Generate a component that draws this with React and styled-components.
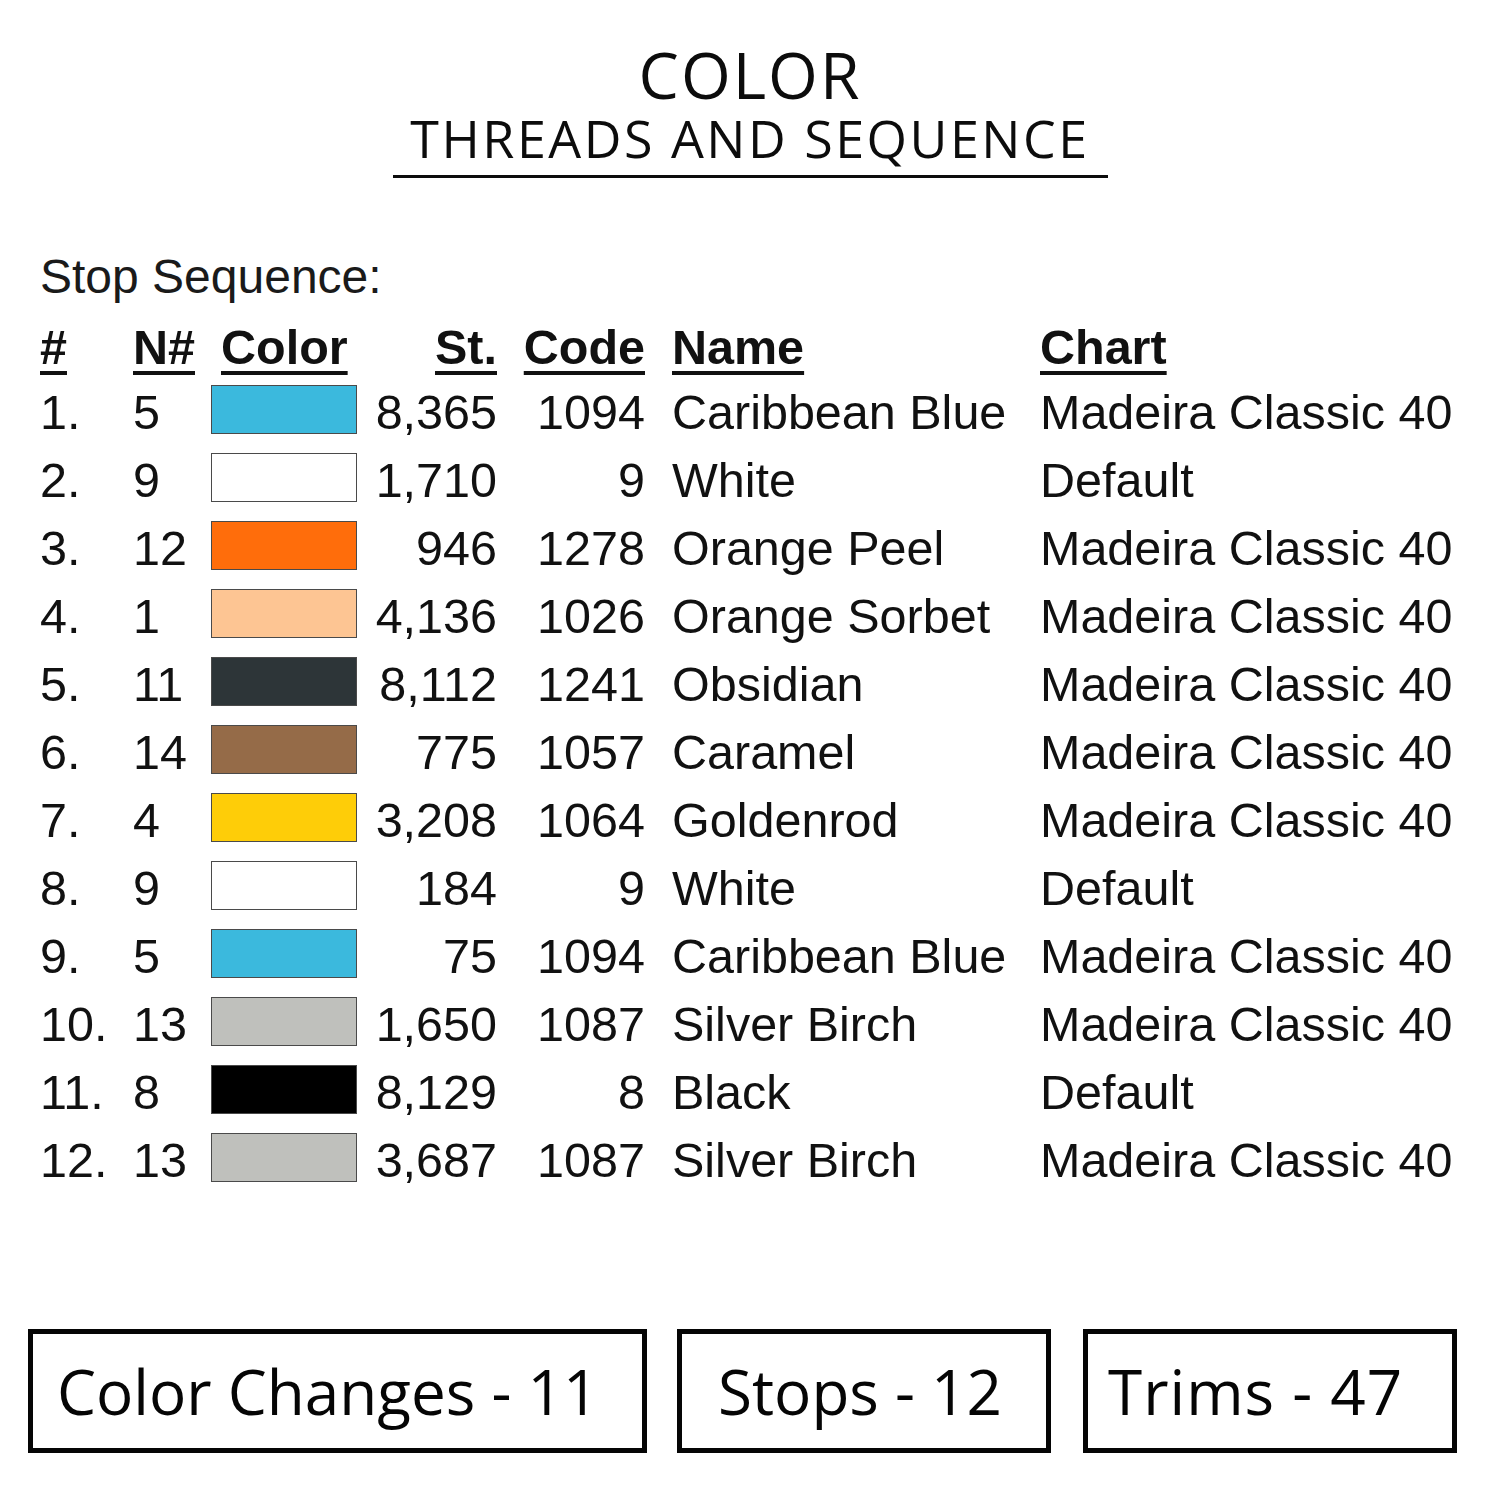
import React from 'react';
import styled, { createGlobalStyle } from 'styled-components';

const GlobalStyle = createGlobalStyle`
	html, body {
		margin: 0;
		padding: 0;
		background: #ffffff;
	}
	body {
		font-family: "Liberation Sans", Arial, sans-serif;
		color: #111111;
	}
`;

const Page = styled.div`
	width: 1500px;
	height: 1500px;
	display: flex;
	flex-direction: column;
	background: #ffffff;
	overflow: hidden;
`;

const TitleBlock = styled.div`
	display: flex;
	flex-direction: column;
	align-items: center;
	padding-top: 40px;
	font-family: "Open Sans", "Lato", sans-serif;
	color: #0c0c0c;
`;

const Title = styled.div`
	font-size: 64px;
	line-height: 70px;
	height: 70px;
	font-weight: 500;
	letter-spacing: 2px;
`;

const Subtitle = styled.div`
	font-size: 52px;
	line-height: 56px;
	height: 56px;
	font-weight: 400;
	letter-spacing: 2.5px;
`;

const Rule = styled.div`
	width: 715px;
	height: 3px;
	margin-top: 9px;
	background: #0c0c0c;
`;

const Section = styled.div`
	padding-left: 40px;
	margin-top: 71px;
`;

const Caption = styled.div`
	font-size: 48px;
	line-height: 56px;
	height: 56px;
	margin-bottom: 11px;
	color: #1a1a1a;
`;

const Table = styled.div`
	display: grid;
	grid-template-columns: 93px 78px 146px 140px 148px 395px auto;
	font-size: 48.5px;
`;

const HeadCell = styled.div`
	height: 62px;
	line-height: 62px;
	font-weight: 700;
	text-decoration: underline;
	text-decoration-thickness: 4px;
	text-underline-offset: 7px;
	text-align: ${(p) => (p.$right ? 'right' : 'left')};
	padding-left: ${(p) => p.$indent || 0}px;
	white-space: nowrap;
`;

const Cell = styled.div`
	height: 68px;
	line-height: 68px;
	text-align: ${(p) => (p.$right ? 'right' : 'left')};
	padding-left: ${(p) => p.$indent || 0}px;
	white-space: nowrap;
	color: #111111;
`;

const SwatchCell = styled.div`
	height: 68px;
	display: flex;
	align-items: center;
	padding-bottom: 6px;
	box-sizing: border-box;
`;

const Swatch = styled.div`
	width: 146px;
	height: 49px;
	box-sizing: border-box;
	border: 1.5px solid #4a4a4a;
	background: ${(p) => p.$color};
`;

const Summary = styled.div`
	display: flex;
	padding-left: 28px;
	margin-top: auto;
	margin-bottom: 47px;
	font-family: "Open Sans", "Lato", sans-serif;
`;

const SummaryBox = styled.div`
	width: ${(p) => p.$width}px;
	height: 124px;
	margin-left: ${(p) => p.$gap || 0}px;
	box-sizing: border-box;
	border: 5px solid #050505;
	display: flex;
	align-items: center;
	padding-left: ${(p) => p.$inset}px;
	font-size: 62px;
	font-weight: 500;
	letter-spacing: ${(p) => p.$spread || 0}px;
	color: #050505;
	white-space: nowrap;
`;

const threads = [
	{ n: 5, color: '#3bb9dd', st: '8,365', code: '1094', name: 'Caribbean Blue', chart: 'Madeira Classic 40' },
	{ n: 9, color: '#ffffff', st: '1,710', code: '9', name: 'White', chart: 'Default' },
	{ n: 12, color: '#ff6d0b', st: '946', code: '1278', name: 'Orange Peel', chart: 'Madeira Classic 40' },
	{ n: 1, color: '#fdc593', st: '4,136', code: '1026', name: 'Orange Sorbet', chart: 'Madeira Classic 40' },
	{ n: 11, color: '#2d3538', st: '8,112', code: '1241', name: 'Obsidian', chart: 'Madeira Classic 40' },
	{ n: 14, color: '#956b48', st: '775', code: '1057', name: 'Caramel', chart: 'Madeira Classic 40' },
	{ n: 4, color: '#fecd08', st: '3,208', code: '1064', name: 'Goldenrod', chart: 'Madeira Classic 40' },
	{ n: 9, color: '#ffffff', st: '184', code: '9', name: 'White', chart: 'Default' },
	{ n: 5, color: '#3bb9dd', st: '75', code: '1094', name: 'Caribbean Blue', chart: 'Madeira Classic 40' },
	{ n: 13, color: '#bfc0bc', st: '1,650', code: '1087', name: 'Silver Birch', chart: 'Madeira Classic 40' },
	{ n: 8, color: '#000000', st: '8,129', code: '8', name: 'Black', chart: 'Default' },
	{ n: 13, color: '#bfc0bc', st: '3,687', code: '1087', name: 'Silver Birch', chart: 'Madeira Classic 40' },
];

function App() {
	return (
		<Page>
			<GlobalStyle />
			<TitleBlock>
				<Title>COLOR</Title>
				<Subtitle>THREADS AND SEQUENCE</Subtitle>
				<Rule />
			</TitleBlock>

			<Section>
				<Caption>Stop Sequence:</Caption>
				<Table>
					<HeadCell>#</HeadCell>
					<HeadCell>N#</HeadCell>
					<HeadCell $indent={10}>Color</HeadCell>
					<HeadCell $right>St.</HeadCell>
					<HeadCell $right>Code</HeadCell>
					<HeadCell $indent={27}>Name</HeadCell>
					<HeadCell>Chart</HeadCell>

					{threads.map((t, i) => (
						<React.Fragment key={i}>
							<Cell>{i + 1}.</Cell>
							<Cell>{t.n}</Cell>
							<SwatchCell>
								<Swatch $color={t.color} />
							</SwatchCell>
							<Cell $right>{t.st}</Cell>
							<Cell $right>{t.code}</Cell>
							<Cell $indent={27}>{t.name}</Cell>
							<Cell>{t.chart}</Cell>
						</React.Fragment>
					))}
				</Table>
			</Section>

			<Summary>
				<SummaryBox $width={619} $inset={24}>Color Changes - 11</SummaryBox>
				<SummaryBox $width={374} $gap={30} $inset={36}>Stops - 12</SummaryBox>
				<SummaryBox $width={374} $gap={32} $inset={20} $spread={1}>Trims - 47</SummaryBox>
			</Summary>
		</Page>
	);
}

export default App;
